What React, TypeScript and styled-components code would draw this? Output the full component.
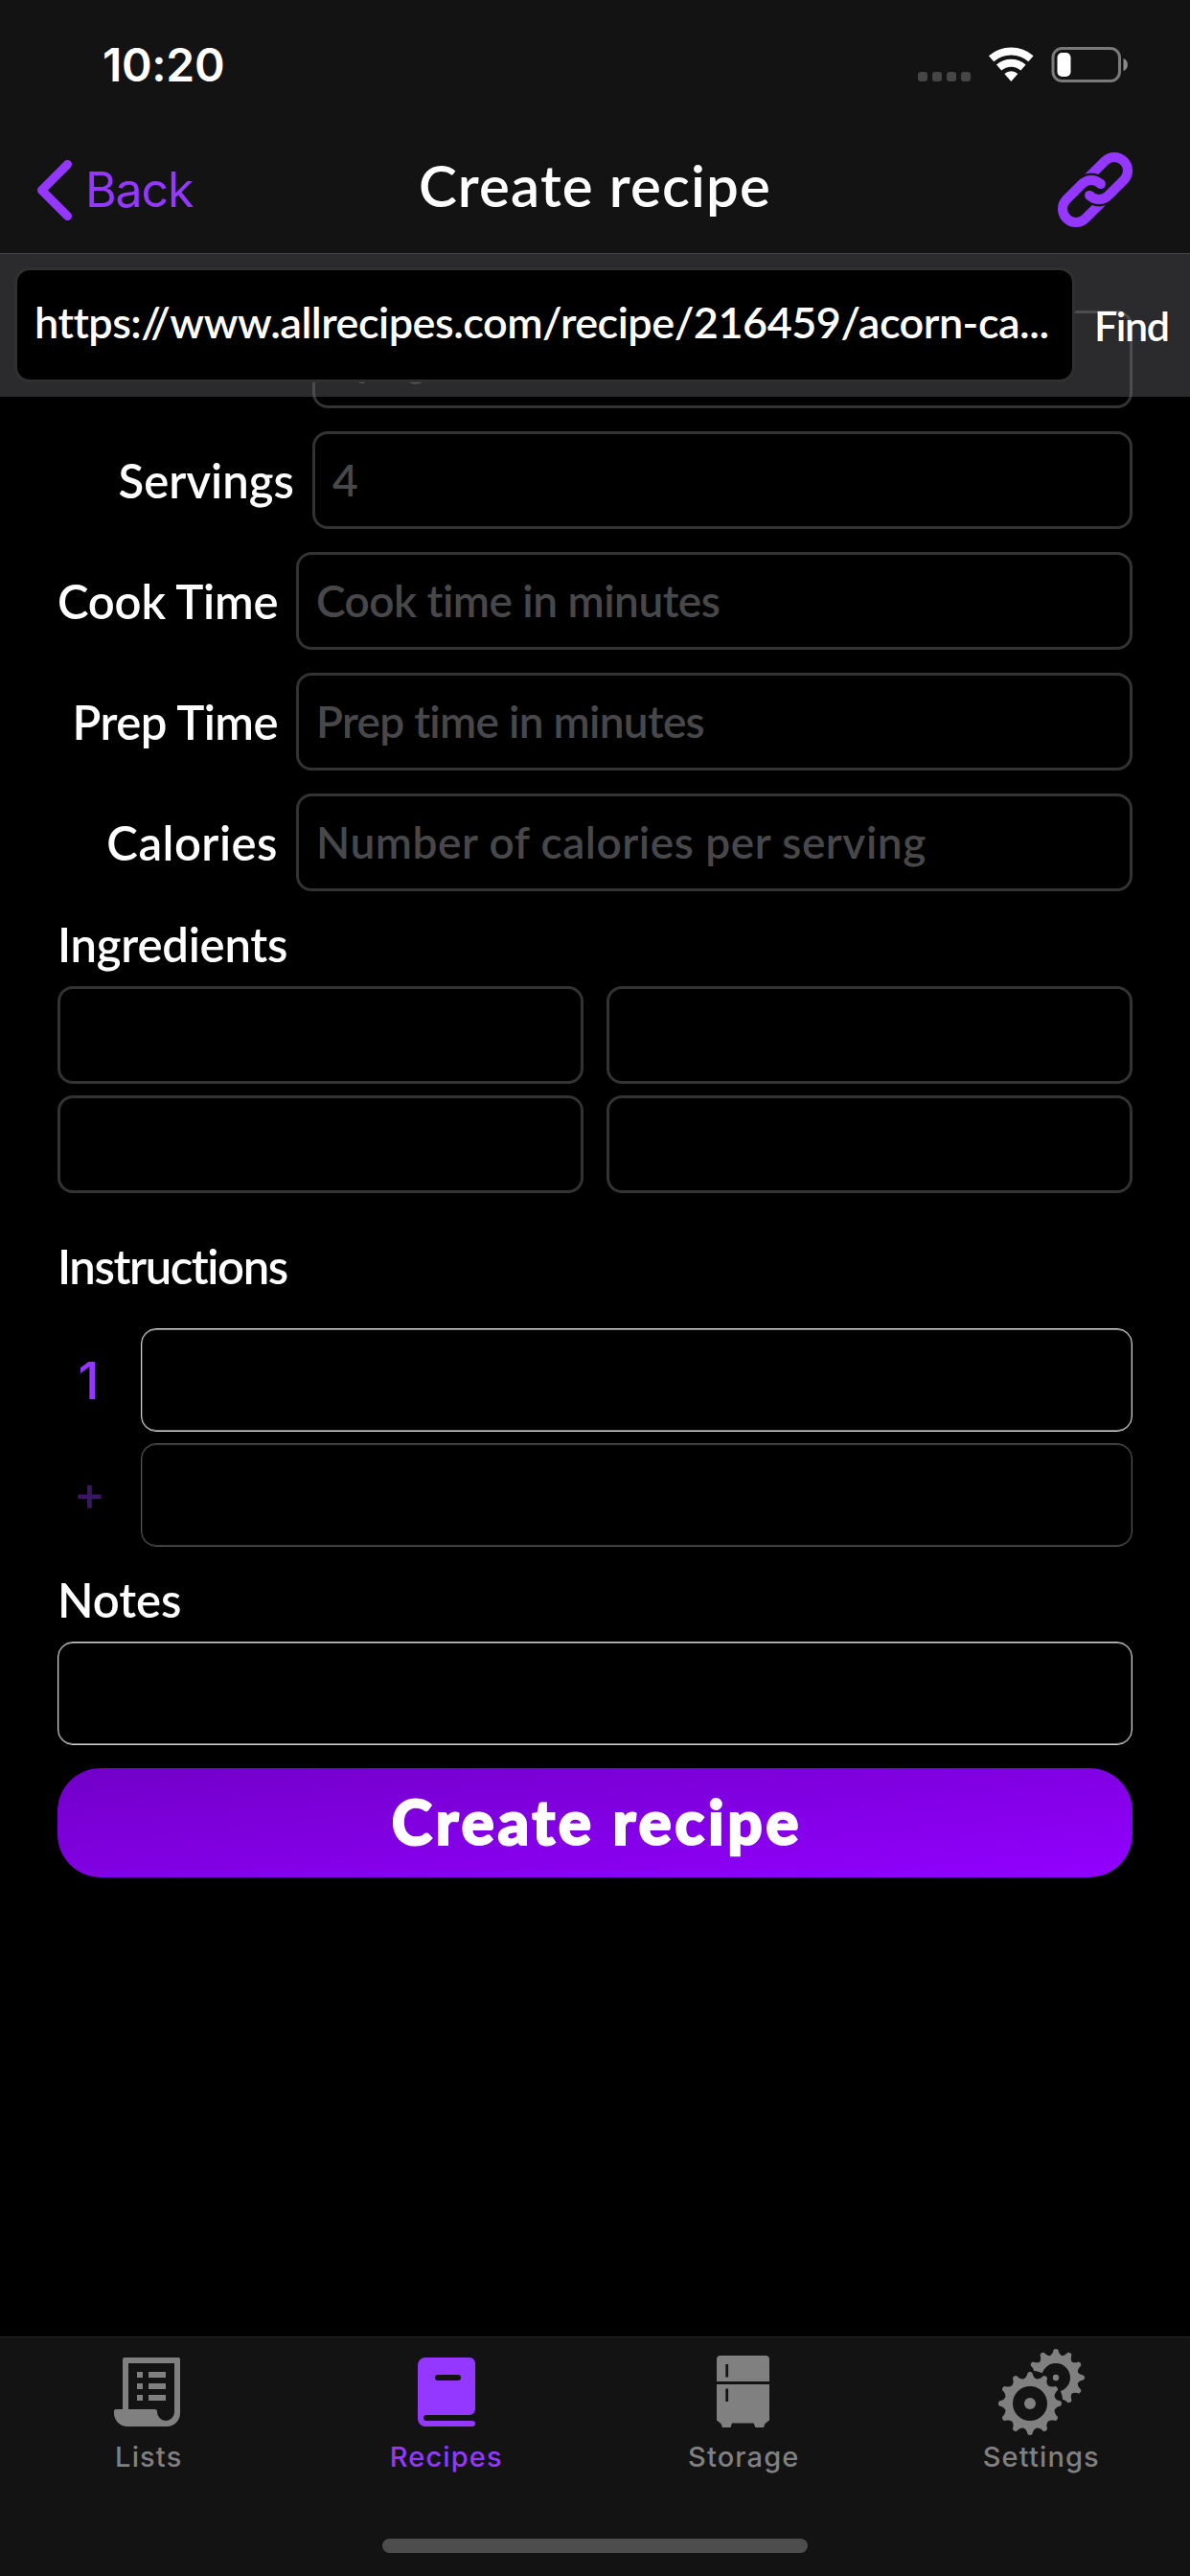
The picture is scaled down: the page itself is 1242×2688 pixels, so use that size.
import React from "react";
import styled, { createGlobalStyle } from "styled-components";

const ACCENT = "#9437ff";
const MUTED = "#808080";
const BAR = "#131313";

const GlobalStyle = createGlobalStyle`
  * { box-sizing: border-box; }
  body { margin: 0; background: #000; }
`;

const Screen = styled.div`
  width: 1242px;
  height: 2688px;
  display: flex;
  flex-direction: column;
  overflow: hidden;
  background: #000;
  color: #fff;
  font-family: Lato, "Open Sans", sans-serif;
  font-weight: 600;
  font-variant-ligatures: none;
`;

const Header = styled.header`
  height: 265px;
  flex: none;
  display: flex;
  flex-direction: column;
  background: ${BAR};
  border-bottom: 1px solid #434345;
`;

const StatusBar = styled.div`
  height: 132px;
  display: flex;
  align-items: center;
  justify-content: space-between;
  padding: 3px 65px 0 107px;
`;

const Clock = styled.span`
  font: 600 48px/60px Inter, sans-serif;
  letter-spacing: -0.3px;
`;

const StatusIcons = styled.div`
  display: flex;
  align-items: center;
`;

const NavBar = styled.nav`
  height: 132px;
  display: grid;
  grid-template-columns: 1fr auto 1fr;
  align-items: center;
  padding: 0 60px 0 38px;
`;

const BackLink = styled.div`
  display: flex;
  align-items: center;
  gap: 14px;
  color: ${ACCENT};
  font: 400 50px/60px Inter, sans-serif;
  letter-spacing: -1.1px;
`;

const Title = styled.h1`
  margin: 0 0 10px;
  padding-left: 22px;
  font-size: 60px;
  line-height: 72px;
  font-weight: 600;
  letter-spacing: 1.15px;
`;

const NavAction = styled.div`
  display: flex;
  justify-content: flex-end;
`;

const Body = styled.main`
  position: relative;
  flex: 1;
  min-height: 0;
`;

const UrlBar = styled.div`
  position: absolute;
  top: 0;
  left: 0;
  right: 0;
  height: 149px;
  display: flex;
  align-items: flex-start;
  gap: 20px;
  padding: 14px 15px 0;
  background: rgba(123, 123, 128, 0.35);
`;

const UrlField = styled.div`
  width: 1107px;
  flex: none;
  height: 120px;
  display: flex;
  align-items: center;
  padding: 0 17px 6px 18px;
  border: 3px solid #303030;
  border-radius: 16px;
  background: #000;
  font-size: 45px;
  white-space: nowrap;
  letter-spacing: -0.5px;
`;

const FindButton = styled.div`
  height: 120px;
  display: flex;
  align-items: center;
  font-size: 43px;
  letter-spacing: -1.4px;
`;

const Form = styled.div`
  display: flex;
  flex-direction: column;
  padding: 59px 60px 0;
`;

const FieldRows = styled.div`
  display: flex;
  flex-direction: column;
  gap: 24px;
`;

const FieldRow = styled.div`
  height: 102px;
  display: flex;
  align-items: center;
`;

const FieldLabel = styled.div<{ $width: number; $track: number }>`
  width: ${(p) => p.$width}px;
  flex: none;
  padding-right: 19px;
  text-align: right;
  white-space: nowrap;
  font-size: 49px;
  letter-spacing: ${(p) => p.$track}px;
`;

const Input = styled.div<{ $track?: number }>`
  flex: 1;
  min-width: 0;
  height: 102px;
  display: flex;
  align-items: center;
  padding: 0 18px 1px;
  border: 3px solid #333;
  border-radius: 16px;
  color: #48484a;
  font-size: 46px;
  white-space: nowrap;
  letter-spacing: ${(p) => p.$track ?? 0}px;
`;

const SectionTitle = styled.h2<{ $height: number; $track: number }>`
  height: ${(p) => p.$height}px;
  display: flex;
  align-items: center;
  margin: 0;
  padding-top: 11px;
  font-size: 49px;
  font-weight: 600;
  letter-spacing: ${(p) => p.$track}px;
`;

const IngredientGrid = styled.div`
  display: grid;
  grid-template-columns: 1fr 1fr;
  gap: 12px 24px;
`;

const Steps = styled.div`
  display: flex;
  flex-direction: column;
  gap: 12px;
`;

const Step = styled.div`
  height: 108px;
  display: flex;
  align-items: center;
`;

const StepMark = styled.div<{ $pending?: boolean }>`
  width: ${(p) => (p.$pending ? 67 : 65)}px;
  margin-right: ${(p) => (p.$pending ? 20 : 22)}px;
  padding: ${(p) => (p.$pending ? "0 0 5px" : "2px 0 0")};
  text-align: center;
  color: ${(p) => (p.$pending ? "#3c1666" : ACCENT)};
  font: 500 ${(p) => (p.$pending ? 50 : 53)}px/64px Inter, sans-serif;
`;

const TextArea = styled.div<{ $dim?: boolean }>`
  flex: 1 0 auto;
  height: 108px;
  border: 1px solid ${(p) => (p.$dim ? "#555" : "#d0d0d0")};
  border-radius: 16px;
  box-shadow: inset 0 1px 0 ${(p) => (p.$dim ? "#303030" : "#7a7a7a")},
    inset 0 -1px 0 ${(p) => (p.$dim ? "#303030" : "#7a7a7a")},
    inset 0 0 0 1px ${(p) => (p.$dim ? "#161616" : "#3a3a3a")};
`;

const Submit = styled.div`
  height: 114px;
  margin-top: 24px;
  display: flex;
  align-items: center;
  justify-content: center;
  padding: 0 0 3px 4px;
  border-radius: 45px;
  background: linear-gradient(to bottom right, #7200c8, #9200ff);
  font-size: 64px;
  font-weight: 900;
  letter-spacing: 3.6px;
  -webkit-text-stroke: 2px #fff;
`;

const TabBar = styled.footer`
  height: 250px;
  flex: none;
  display: flex;
  flex-direction: column;
  background: ${BAR};
  border-top: 1px solid #262626;
`;

const Tabs = styled.div`
  display: grid;
  grid-template-columns: repeat(4, 1fr);
  padding-top: 12px;
`;

const Tab = styled.div<{ $active?: boolean }>`
  display: flex;
  flex-direction: column;
  align-items: center;
  gap: 5px;
  color: ${(p) => (p.$active ? ACCENT : MUTED)};
  font: 500 29px/36px Inter, sans-serif;
  letter-spacing: 1.15px;
`;

const HomeIndicator = styled.div`
  width: 444px;
  height: 15px;
  margin: 67px auto 0;
  border-radius: 8px;
  background: #4d4d4d;
`;

const StatusGlyphs = () => (
  <svg width="219" height="38" viewBox="0 0 219 38">
    {[0, 15, 30, 45].map((x) => (
      <rect key={x} x={x} y="26" width="10" height="10" rx="3" fill="#464646" />
    ))}
    <g transform="translate(97.3 36)" fill="none" stroke="#fff" strokeWidth="8">
      <path d="M-20.7 -23.7A31.5 31.5 0 0 1 20.7 -23.7" />
      <path d="M-12.7 -14.6A19.3 19.3 0 0 1 12.7 -14.6" />
      <path d="M0 0L-7 -8.1A10.7 10.7 0 0 1 7 -8.1Z" fill="#fff" stroke="none" />
    </g>
    <rect x="141" y="1.5" width="69.5" height="34" rx="9.5" fill="none" stroke="#7a7a7a" strokeWidth="3" />
    <rect x="145.5" y="6" width="14" height="25" rx="5" fill="#fff" />
    <path d="M214.5 12a7 7 0 0 1 0 13z" fill="#8a8a8a" />
  </svg>
);

const ChevronIcon = () => (
  <svg width="37" height="63" viewBox="0 0 37 63" fill="none" stroke={ACCENT} strokeWidth="9" strokeLinecap="round" strokeLinejoin="round">
    <path d="M32.5 4.5L5.5 31.5L32.5 58.5" />
  </svg>
);

const LinkHalf = () => (
  <>
    <path d="M30 28L49.1 9.1" mask="url(#link-gap)" />
    <path d="M48.9 9.3L49.1 9.1A14 14 0 0 1 68.9 28.9L52.9 44.9A14 14 0 0 1 33.1 44.9" />
    <circle cx="33.1" cy="44.9" r="5" fill={ACCENT} stroke="none" />
  </>
);

const LinkIcon = () => (
  <svg width="78" height="78" viewBox="0 0 78 78" fill="none" stroke={ACCENT} strokeWidth="10">
    <mask id="link-gap" maskUnits="userSpaceOnUse" x="0" y="0" width="78" height="78">
      <rect width="78" height="78" fill="#fff" stroke="none" />
      <circle cx="35" cy="43" r="21.5" fill="#000" stroke="none" />
    </mask>
    <LinkHalf />
    <g transform="rotate(180 39 39)">
      <LinkHalf />
    </g>
  </svg>
);

const ListsIcon = () => (
  <svg width="90" height="90" viewBox="0 0 90 90" fill="currentColor">
    <path fillRule="evenodd" d="M20 9H76a2 2 0 0 1 2 2V67a14 14 0 0 1-14 14H23a14 14 0 0 1-14-14V65a2 2 0 0 1 2-2H18V11a2 2 0 0 1 2-2zM24 15V63H51.500a2.500 2.500 0 0 1 2.500 2.500V66a9 9 0 0 0 18 0V15z" />
    {[24, 36, 48].map((y) => (
      <path key={y} d={`M33 ${y}h6v6h-6zM45 ${y}h18v6h-18z`} />
    ))}
  </svg>
);

const RecipesIcon = () => (
  <svg width="90" height="90" viewBox="0 0 90 90" fill="currentColor">
    <path fillRule="evenodd" d="M23 9H69a6 6 0 0 1 6 6V63a6 6 0 0 1-6 6H24a3 3 0 0 0 0 6H72a3 3 0 0 1 0 6H23a8 8 0 0 1-8-8V17a8 8 0 0 1 8-8zM36 27h21a3 3 0 0 1 0 6h-21a3 3 0 0 1 0-6z" />
  </svg>
);

const StorageIcon = () => (
  <svg width="90" height="90" viewBox="0 0 90 90" fill="currentColor">
    <path fillRule="evenodd" d="M21 7H68a4 4 0 0 1 4 4V34H17V11a4 4 0 0 1 4-4zM26.300 16v13.500h2.800V16z" />
    <path fillRule="evenodd" d="M17 37H72V74.500L67.500 78L66 82H57.500L55.500 77.500H33L31.500 82H23L21.500 78L17 74.500zM26.300 41.500v13.500h2.800V41.500z" />
  </svg>
);

const gearPath = (cx: number, cy: number, tip: number, root: number, half: number) => {
  const teeth = 12;
  const at = (angle: number, r: number, off: number) =>
    `${(cx + r * Math.cos(angle) - off * Math.sin(angle)).toFixed(2)} ${(cy + r * Math.sin(angle) + off * Math.cos(angle)).toFixed(2)}`;
  const edge = Math.PI / teeth;
  let d = "";
  for (let i = 0; i < teeth; i++) {
    const a = (i * 2 * Math.PI) / teeth;
    const shoulder = tip - half;
    d += `${i === 0 ? "M" : "L"}${at(a - edge, root, 0)}`;
    d += `Q${at(a, root + 0.5, -half - 1)} ${at(a, shoulder, -half)}`;
    d += `A${half} ${half} 0 0 1 ${at(a, shoulder, half)}`;
    d += `Q${at(a, root + 0.5, half + 1)} ${at(a + edge, root, 0)}`;
  }
  return d + "Z";
};

const ring = (cx: number, cy: number, r: number) =>
  `M${cx - r} ${cy}a${r} ${r} 0 1 0 ${2 * r} 0a${r} ${r} 0 1 0 ${-2 * r} 0Z`;

const SettingsIcon = () => (
  <svg width="90" height="90" viewBox="0 0 90 90" fill="currentColor">
    <mask id="gear-gap" maskUnits="userSpaceOnUse" x="0" y="0" width="90" height="90">
      <rect width="90" height="90" fill="#fff" />
      <circle cx="33" cy="57" r="34.5" fill="#000" />
    </mask>
    <path mask="url(#gear-gap)" fillRule="evenodd" d={gearPath(60, 30, 30, 23.5, 2.8) + ring(60, 30, 15)} />
    <circle cx="60" cy="30" r="3.2" />
    <path fillRule="evenodd" d={gearPath(33, 57, 33, 26.5, 2.9) + ring(33, 57, 18)} />
    <circle cx="33" cy="57" r="6" />
  </svg>
);

const fields = [
  { label: "", placeholder: "Spaghetti", width: 266, track: 0, inputTrack: 0.6 },
  { label: "Servings", placeholder: "4", width: 266, track: 0.05, inputTrack: 0 },
  { label: "Cook Time", placeholder: "Cook time in minutes", width: 249, track: -0.2, inputTrack: -0.5 },
  { label: "Prep Time", placeholder: "Prep time in minutes", width: 249, track: -0.5, inputTrack: -0.7 },
  { label: "Calories", placeholder: "Number of calories per serving", width: 249, track: 0.5, inputTrack: 0.53 },
];

const tabs = [
  { name: "Lists", Icon: ListsIcon },
  { name: "Recipes", Icon: RecipesIcon, active: true },
  { name: "Storage", Icon: StorageIcon },
  { name: "Settings", Icon: SettingsIcon },
];

export default function App() {
  return (
    <Screen>
      <GlobalStyle />
      <Header>
        <StatusBar>
          <Clock>10:20</Clock>
          <StatusIcons>
            <StatusGlyphs />
          </StatusIcons>
        </StatusBar>
        <NavBar>
          <BackLink>
            <ChevronIcon />
            <span>Back</span>
          </BackLink>
          <Title>Create recipe</Title>
          <NavAction>
            <LinkIcon />
          </NavAction>
        </NavBar>
      </Header>

      <Body>
        <Form>
          <FieldRows>
            {fields.map((f) => (
              <FieldRow key={f.placeholder}>
                <FieldLabel $width={f.width} $track={f.track}>{f.label}</FieldLabel>
                <Input $track={f.inputTrack}>{f.placeholder}</Input>
              </FieldRow>
            ))}
          </FieldRows>

          <SectionTitle $height={99} $track={-0.2}>Ingredients</SectionTitle>
          <IngredientGrid>
            <Input />
            <Input />
            <Input />
            <Input />
          </IngredientGrid>

          <SectionTitle $height={141} $track={-1.4}>Instructions</SectionTitle>
          <Steps>
            <Step>
              <StepMark>1</StepMark>
              <TextArea />
            </Step>
            <Step>
              <StepMark $pending>+</StepMark>
              <TextArea $dim />
            </Step>
          </Steps>

          <SectionTitle $height={99} $track={0}>Notes</SectionTitle>
          <TextArea />

          <Submit>Create recipe</Submit>
        </Form>

        <UrlBar>
          <UrlField>https://www.allrecipes.com/recipe/216459/acorn-ca...</UrlField>
          <FindButton>Find</FindButton>
        </UrlBar>
      </Body>

      <TabBar>
        <Tabs>
          {tabs.map(({ name, Icon, active }) => (
            <Tab key={name} $active={active}>
              <Icon />
              <span>{name}</span>
            </Tab>
          ))}
        </Tabs>
        <HomeIndicator />
      </TabBar>
    </Screen>
  );
}
